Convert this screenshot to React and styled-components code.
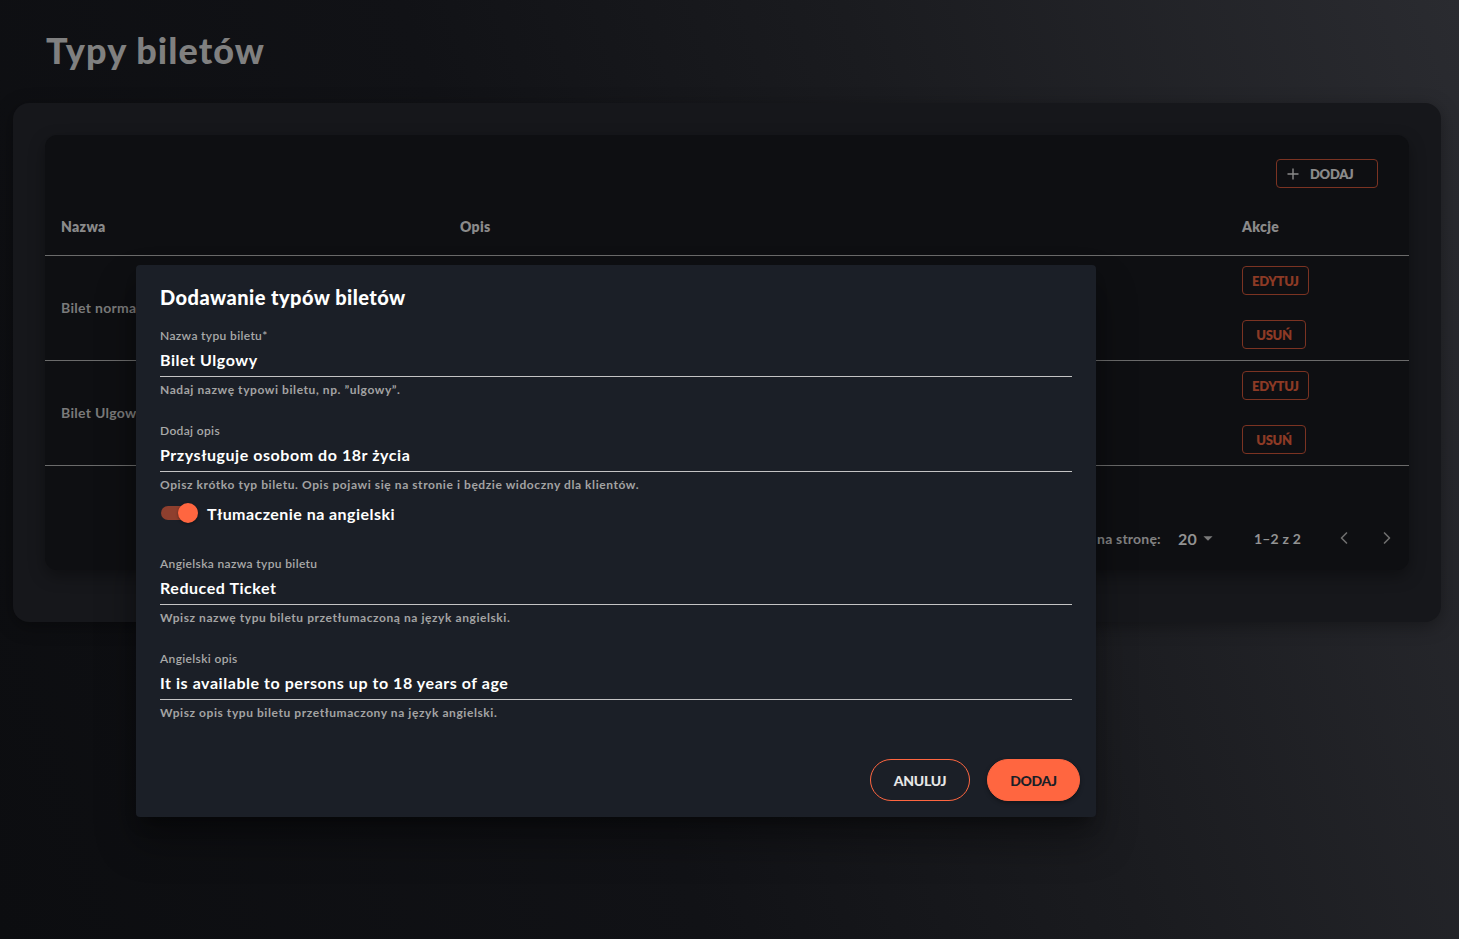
import React from "react";
import styled, { createGlobalStyle } from "styled-components";

const Global = createGlobalStyle`
  html, body { margin: 0; padding: 0; }
  body {
    font-family: Lato, "Open Sans", "Noto Sans", sans-serif;
    background: #0e0f12;
  }
  * { box-sizing: border-box; }
`;

const Page = styled.div`
  position: relative;
  width: 1459px;
  min-height: 939px;
  padding: 26px 18px 0 13px;
  background: linear-gradient(72deg, #0c0d10 0%, #111216 40%, #1a1b1f 65%, #2a2b30 100%);
  overflow: hidden;
`;

const Title = styled.h1`
  margin: 0 0 29px 33px;
  font-size: 36px;
  line-height: 48px;
  font-weight: 900;
  color: #808080;
  letter-spacing: 1.1px;
`;

const OuterCard = styled.section`
  background: #16171b;
  border-radius: 16px;
  padding: 32px 32px 52px;
  box-shadow: 0 4px 18px rgba(0, 0, 0, 0.35);
`;

const InnerCard = styled.div`
  background: #0e0f12;
  border-radius: 12px;
  box-shadow: 0 6px 16px rgba(0, 0, 0, 0.35);
  padding-top: 24px;
`;

const Toolbar = styled.div`
  display: flex;
  justify-content: flex-end;
  padding-right: 31px;
  margin-bottom: 12px;
`;

const OutlineAdd = styled.button`
  display: flex;
  align-items: center;
  gap: 11px;
  height: 29px;
  width: 102px;
  padding: 0 10px;
  background: transparent;
  border: 1px solid #7b3322;
  border-radius: 4px;
  color: #8a8a8a;
  font-family: inherit;
  font-weight: 800;
  font-size: 13px;
  letter-spacing: -0.3px;
`;

const Grid = styled.div`
  display: grid;
  grid-template-columns: 399px 782px 1fr;
  padding-left: 16px;
  align-items: center;
`;

const HeadRow = styled(Grid)`
  height: 56px;
  border-bottom: 1px solid #6b6b6b;
  color: #8a8a8a;
  font-weight: 800;
  font-size: 14px;
  letter-spacing: 0.3px;
  padding-bottom: 2px;
`;

const BodyRow = styled(Grid)`
  height: 105px;
  border-bottom: 1px solid #6b6b6b;
  color: #7a7a7a;
  font-weight: 700;
  font-size: 14px;
  letter-spacing: 0.3px;
  padding-bottom: 1px;
`;

const Actions = styled.div`
  display: flex;
  flex-direction: column;
  align-items: flex-start;
  gap: 25px;
`;

const ActionBtn = styled.button`
  height: 29px;
  min-width: 64px;
  padding: 0 9px;
  background: transparent;
  border: 1px solid #7b3322;
  border-radius: 4px;
  color: #8c3a25;
  font-family: inherit;
  font-weight: 800;
  font-size: 13px;
  letter-spacing: -0.3px;
`;

const Footer = styled.div`
  display: flex;
  justify-content: flex-end;
  align-items: center;
  height: 104px;
  padding: 40px 12px 0 0;
  color: #828282;
  font-size: 14px;
  font-weight: 700;
  letter-spacing: 0.2px;
`;

const PerPage = styled.span`
  margin-right: 17px;
`;

const Select = styled.span`
  display: flex;
  align-items: center;
  color: #939393;
  font-size: 16px;
  margin-right: 35px;
`;

const Count = styled.span`
  color: #939393;
  margin-right: 33px;
`;

const Nav = styled.span`
  display: flex;
  gap: 23px;
  color: #6e6e6e;
`;

const Dialog = styled.div`
  position: absolute;
  left: 136px;
  top: 265px;
  width: 960px;
  height: 552px;
  background: #1b1f27;
  border-radius: 4px;
  box-shadow: 0 11px 15px -7px rgba(0,0,0,0.4), 0 24px 38px 3px rgba(0,0,0,0.3);
  padding: 20px 24px 16px;
  display: flex;
  flex-direction: column;
`;

const DialogTitle = styled.h2`
  margin: 0 0 19px;
  font-size: 20px;
  line-height: 24px;
  font-weight: 900;
  color: #ffffff;
  letter-spacing: 0.45px;
`;

const Field = styled.div`
  display: flex;
  flex-direction: column;
  margin-bottom: ${(p) => p.$gap}px;
`;

const Label = styled.label`
  font-size: 12px;
  line-height: 16px;
  color: #a9a9a9;
  font-weight: 600;
  letter-spacing: 0.35px;
`;

const Value = styled.div`
  margin-top: 4px;
  font-size: 16px;
  line-height: 24px;
  padding-bottom: 4px;
  color: #ffffff;
  font-weight: 700;
  letter-spacing: 0.55px;
  border-bottom: 1px solid #c4c4c4;
`;

const Helper = styled.div`
  margin-top: 5px;
  font-size: 12px;
  line-height: 16px;
  color: #a3a3a3;
  font-weight: 700;
  letter-spacing: 0.57px;
`;

const ToggleRow = styled.div`
  display: flex;
  align-items: center;
  height: 24px;
  margin: 8px 0 31px;
  gap: 9px;
  color: #ffffff;
  font-size: 16px;
  font-weight: 700;
  letter-spacing: 0.45px;
`;

const Switch = styled.span`
  position: relative;
  width: 38px;
  height: 20px;
  display: inline-block;
  &::before {
    content: "";
    position: absolute;
    left: 1px;
    top: 3px;
    width: 34px;
    height: 14px;
    border-radius: 7px;
    background: #8e3f2e;
  }
  &::after {
    content: "";
    position: absolute;
    right: 0;
    top: 0;
    width: 20px;
    height: 20px;
    border-radius: 50%;
    background: #ff6640;
    box-shadow: 0 1px 3px rgba(0,0,0,0.4);
  }
`;

const DialogActions = styled.div`
  margin-top: auto;
  margin-right: -8px;
  display: flex;
  justify-content: flex-end;
  gap: 17px;
`;

const PillButton = styled.button`
  height: 42px;
  width: ${(p) => p.$w}px;
  border-radius: 21px;
  font-family: inherit;
  font-size: 14px;
  font-weight: 900;
  letter-spacing: -0.3px;
  border: 1px solid #ff6640;
  background: ${(p) => (p.$primary ? "#ff6640" : "transparent")};
  color: ${(p) => (p.$primary ? "#1b1f27" : "#e6e6e6")};
  box-shadow: ${(p) => (p.$primary ? "0 2px 4px rgba(0,0,0,0.35)" : "none")};
`;

const Plus = () => (
  <svg width="12" height="12" viewBox="0 0 12 12" fill="none" stroke="#8a8a8a" strokeWidth="1.4">
    <path d="M6 0.5v11M0.5 6h11" />
  </svg>
);

const Caret = () => (
  <svg width="22" height="22" viewBox="0 0 24 24" fill="#7a7a7a">
    <path d="M7 10l5 5 5-5z" />
  </svg>
);

const Chevron = ({ dir }) => (
  <svg width="20" height="20" viewBox="0 0 24 24" fill="none" stroke="#6e6e6e" strokeWidth="2" strokeLinecap="round" strokeLinejoin="round">
    <path d={dir === "left" ? "M15 6l-6 6 6 6" : "M9 6l6 6-6 6"} />
  </svg>
);

const rows = [
  { name: "Bilet normalny", desc: "" },
  { name: "Bilet Ulgowy", desc: "" },
];

const fields = [
  {
    label: "Nazwa typu biletu*",
    value: "Bilet Ulgowy",
    helper: "Nadaj nazwę typowi biletu, np. ˮulgowyˮ.",
  },
  {
    label: "Dodaj opis",
    value: "Przysługuje osobom do 18r życia",
    helper: "Opisz krótko typ biletu. Opis pojawi się na stronie i będzie widoczny dla klientów.",
  },
];

const enFields = [
  {
    label: "Angielska nazwa typu biletu",
    value: "Reduced Ticket",
    helper: "Wpisz nazwę typu biletu przetłumaczoną na język angielski.",
  },
  {
    label: "Angielski opis",
    value: "It is available to persons up to 18 years of age",
    helper: "Wpisz opis typu biletu przetłumaczony na język angielski.",
  },
];

export default function App() {
  return (
    <>
      <Global />
      <Page>
        <Title>Typy biletów</Title>
        <OuterCard>
          <InnerCard>
            <Toolbar>
              <OutlineAdd>
                <Plus />
                DODAJ
              </OutlineAdd>
            </Toolbar>
            <HeadRow>
              <span>Nazwa</span>
              <span>Opis</span>
              <span>Akcje</span>
            </HeadRow>
            {rows.map((r) => (
              <BodyRow key={r.name}>
                <span>{r.name}</span>
                <span>{r.desc}</span>
                <Actions>
                  <ActionBtn>EDYTUJ</ActionBtn>
                  <ActionBtn>USUŃ</ActionBtn>
                </Actions>
              </BodyRow>
            ))}
            <Footer>
              <PerPage>Wierszy na stronę:</PerPage>
              <Select>
                20
                <Caret />
              </Select>
              <Count>1–2 z 2</Count>
              <Nav>
                <Chevron dir="left" />
                <Chevron dir="right" />
              </Nav>
            </Footer>
          </InnerCard>
        </OuterCard>

        <Dialog>
          <DialogTitle>Dodawanie typów biletów</DialogTitle>
          {fields.map((f, i) => (
            <Field key={f.label} $gap={i === 0 ? 25 : 0}>
              <Label>{f.label}</Label>
              <Value>{f.value}</Value>
              <Helper>{f.helper}</Helper>
            </Field>
          ))}
          <ToggleRow>
            <Switch />
            Tłumaczenie na angielski
          </ToggleRow>
          {enFields.map((f, i) => (
            <Field key={f.label} $gap={i === 0 ? 25 : 0}>
              <Label>{f.label}</Label>
              <Value>{f.value}</Value>
              <Helper>{f.helper}</Helper>
            </Field>
          ))}
          <DialogActions>
            <PillButton $w={100}>ANULUJ</PillButton>
            <PillButton $w={93} $primary>DODAJ</PillButton>
          </DialogActions>
        </Dialog>
      </Page>
    </>
  );
}
